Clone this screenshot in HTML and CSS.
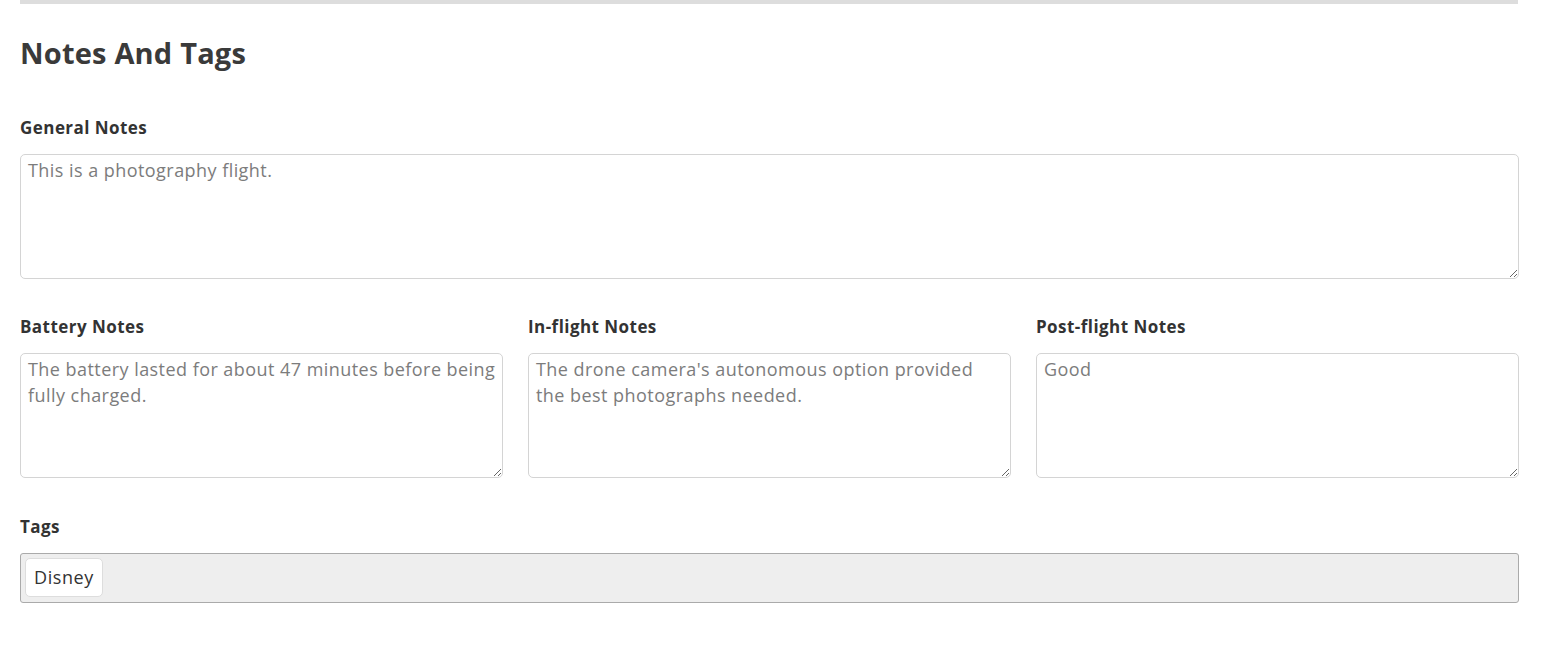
FILE: index.html
```html
<!DOCTYPE html>
<html>
<head>
<meta charset="utf-8">
<link rel="stylesheet" href="styles.css">
</head>
<body>
<div class="page">
  <div class="topbar"></div>
  <h2 class="title">Notes And Tags</h2>
  <div class="field">
    <label class="label">General Notes</label>
    <textarea class="area">This is a photography flight.</textarea>
  </div>
  <div class="row">
    <div class="field">
      <label class="label">Battery Notes</label>
      <textarea class="area">The battery lasted for about 47 minutes before being fully charged.</textarea>
    </div>
    <div class="field">
      <label class="label">In-flight Notes</label>
      <textarea class="area">The drone camera's autonomous option provided the best photographs needed.</textarea>
    </div>
    <div class="field">
      <label class="label">Post-flight Notes</label>
      <textarea class="area">Good</textarea>
    </div>
  </div>
  <div class="field">
    <label class="label">Tags</label>
    <div class="tagbox">
      <span class="tag">Disney</span>
    </div>
  </div>
</div>
</body>
</html>
```

FILE: styles.css
```css
html, body {
  margin: 0;
  padding: 0;
  background: #fff;
}
body {
  font-family: "Open Sans", Lato, sans-serif;
  color: #3a3a3a;
}
.page {
  width: 1499px;
  margin-left: 20px;
}
.topbar {
  height: 4px;
  background: #dddddd;
  margin-right: 1px;
}
.title {
  margin: 32px 0 0 0;
  font-size: 29px;
  line-height: 34px;
  font-weight: 700;
  letter-spacing: 0.2px;
  color: #3a3a3a;
}
.field {
  display: flex;
  flex-direction: column;
}
.title + .field {
  margin-top: 48px;
}
.label {
  font-size: 17px;
  line-height: 20px;
  font-weight: 700;
  letter-spacing: 0.45px;
  color: #333;
  margin-bottom: 16px;
}
.area {
  box-sizing: border-box;
  height: 125px;
  border: 1px solid #d4d4d4;
  border-radius: 5px;
  padding: 2px 4px 2px 7px;
  font-family: "Open Sans", Lato, sans-serif;
  font-size: 18px;
  letter-spacing: 0.45px;
  line-height: 26px;
  color: #7c7c7c;
  resize: vertical;
  outline: none;
  margin: 0;
}
.row {
  display: grid;
  grid-template-columns: 1fr 1fr 1fr;
  gap: 25px;
  margin-top: 38px;
}
.row + .field {
  margin-top: 39px;
}
.tagbox {
  box-sizing: border-box;
  height: 50px;
  background: #eeeeee;
  border: 1px solid #aaaaaa;
  border-radius: 3px;
  padding: 4px;
  display: flex;
  align-items: flex-start;
}
.tag {
  box-sizing: border-box;
  height: 39px;
  padding: 0 8px;
  background: #fff;
  border: 1px solid #dddddd;
  border-radius: 5px;
  font-size: 18px;
  letter-spacing: 0.6px;
  line-height: 37px;
  color: #333;
}
```
